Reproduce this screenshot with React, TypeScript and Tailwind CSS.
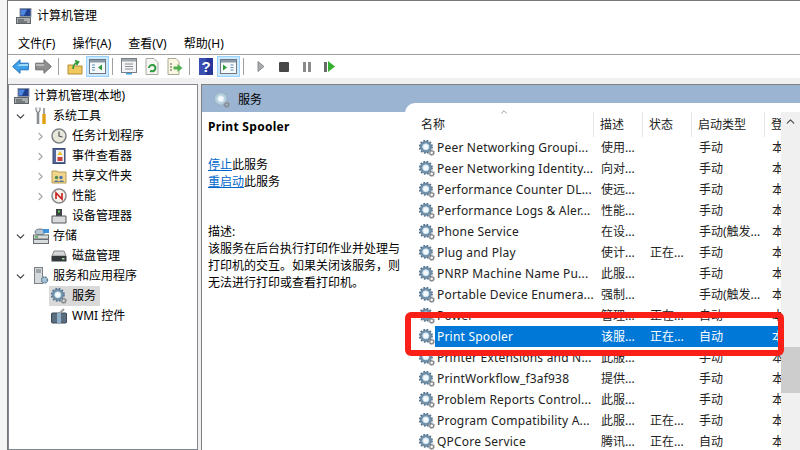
import React from "react";
import { ChevronDown, ChevronRight, ChevronUp } from "lucide-react";

const FONT = "font-['Noto_Sans','Noto_Sans_CJK_SC',sans-serif]";

type Row = { name: string; desc: string; status?: string; start: string; selected?: boolean };

const ROWS: Row[] = [
  { name: "Peer Networking Groupi...", desc: "使用...", start: "手动" },
  { name: "Peer Networking Identity...", desc: "向对...", start: "手动" },
  { name: "Performance Counter DL...", desc: "使远...", start: "手动" },
  { name: "Performance Logs & Aler...", desc: "性能...", start: "手动" },
  { name: "Phone Service", desc: "在设...", start: "手动(触发..." },
  { name: "Plug and Play", desc: "使计...", status: "正在...", start: "手动" },
  { name: "PNRP Machine Name Pu...", desc: "此服...", start: "手动" },
  { name: "Portable Device Enumera...", desc: "强制...", start: "手动(触发..." },
  { name: "Power", desc: "管理...", status: "正在...", start: "自动" },
  { name: "Print Spooler", desc: "该服...", status: "正在...", start: "自动", selected: true },
  { name: "Printer Extensions and N...", desc: "此服...", start: "手动" },
  { name: "PrintWorkflow_f3af938", desc: "提供...", start: "手动" },
  { name: "Problem Reports Control...", desc: "此服...", start: "手动" },
  { name: "Program Compatibility A...", desc: "此服...", status: "正在...", start: "手动" },
  { name: "QPCore Service", desc: "腾讯...", status: "正在...", start: "自动" },
];

// big cog with a small one at the bottom right
const Gears = ({ dim = false }: { dim?: boolean }) => (
  <svg width="16" height="16" viewBox="0 0 16 16" className="shrink-0">
    <circle cx="6.8" cy="6.8" r="4.6" fill="none" stroke={dim ? "#b4d0de" : "#6f8fa8"} strokeWidth="3" />
    <circle cx="6.8" cy="6.8" r="6.3" fill="none" stroke={dim ? "#9cb0bf" : "#55708a"} strokeWidth="1.5" strokeDasharray="1.7 1.6" />
    <circle cx="6.8" cy="6.8" r="3.1" fill="#f4f9fc" stroke={dim ? "#d6e6ee" : "#b7d3e6"} strokeWidth="0.8" />
    <circle cx="12.7" cy="12.7" r="1.9" fill="none" stroke="#85898c" strokeWidth="1.3" />
    <circle cx="12.7" cy="12.7" r="2.9" fill="none" stroke="#96999c" strokeWidth="1" strokeDasharray="1 1" />
  </svg>
);

const Computer = () => (
  <svg width="16" height="16" viewBox="0 0 16 16" className="shrink-0">
    <rect x="4" y="0.5" width="11" height="8" fill="#20408f" stroke="#8d96a3" />
    <path d="M5 1.5h6l-3 6H5z" fill="#4f86e0" />
    <rect x="0.5" y="9.5" width="14" height="6" fill="#a9adb0" stroke="#5f6468" />
    <path d="M2 12h6M2 14h9" stroke="#44484c" />
  </svg>
);

const Tools = () => (
  <svg width="16" height="18" viewBox="0 0 16 18">
    <path d="M5 3v14" stroke="#8a8f94" strokeWidth="2.6" />
    <path d="M3 0.5v3.5l2 1.5 2-1.5V0.5" fill="#eef0f2" stroke="#70767b" strokeWidth="1" />
    <path d="M11 1v6" stroke="#a0a4a8" strokeWidth="2" />
    <path d="M11 7v10" stroke="#e0a010" strokeWidth="3.4" />
  </svg>
);

const Clock = () => (
  <svg width="16" height="16" viewBox="0 0 16 16">
    <circle cx="8" cy="8" r="7" fill="#e9e6da" stroke="#7d8388" strokeWidth="1.5" />
    <path d="M8 3.5V8l3.5 1" fill="none" stroke="#55595c" strokeWidth="1.2" />
  </svg>
);

const EventLog = () => (
  <svg width="16" height="16" viewBox="0 0 16 16">
    <rect x="2" y="0.5" width="12" height="15" fill="#52689a" stroke="#394a70" />
    <rect x="5" y="2" width="8" height="12" fill="#eef0f2" />
    <path d="M9 3l2.5 4h-5z" fill="#f0c020" />
    <rect x="6.5" y="9" width="5" height="4" fill="#c84040" />
  </svg>
);

const SharedFolder = () => (
  <svg width="16" height="16" viewBox="0 0 16 16">
    <path d="M1 3h5l1 1h8v11H1z" fill="#efd68c" stroke="#b89c50" />
    <circle cx="5.5" cy="9.5" r="1.7" fill="#4d8a4d" />
    <circle cx="10" cy="9.5" r="1.7" fill="#4a70b0" />
    <path d="M3 14c0-2 5-2 5 0zM8 14c0-2 5-2 5 0z" fill="#55789a" />
  </svg>
);

const Perf = () => (
  <svg width="16" height="16" viewBox="0 0 16 16">
    <circle cx="8" cy="8" r="7" fill="#f3f1ea" stroke="#868a8c" strokeWidth="1.5" />
    <path d="M5 11V5l6 6V5" fill="none" stroke="#c82020" strokeWidth="1.6" />
  </svg>
);

const Device = () => (
  <svg width="16" height="16" viewBox="0 0 16 16">
    <rect x="5" y="1" width="6" height="7" fill="#3e4246" />
    <rect x="7" y="2.5" width="2" height="2" fill="#5fd060" />
    <path d="M1 8h14v7H1z" fill="#d8d9da" stroke="#55585b" />
  </svg>
);

const Storage = () => (
  <svg width="16" height="16" viewBox="0 0 16 16">
    <ellipse cx="7" cy="4" rx="5" ry="3" fill="#b5c4cf" stroke="#6a7780" />
    <rect x="10" y="1" width="6" height="4" fill="#3f93d8" />
    <rect x="0.5" y="7" width="15" height="4" fill="#d9dcdd" stroke="#676d70" />
    <rect x="0.5" y="11.5" width="15" height="4" fill="#d9dcdd" stroke="#676d70" />
    <rect x="2" y="8.2" width="3" height="1.5" fill="#46a846" />
  </svg>
);

const Disk = () => (
  <svg width="16" height="16" viewBox="0 0 16 16">
    <path d="M3 3h10l2 5H1z" fill="#d4d6d8" stroke="#85898c" />
    <rect x="0.5" y="8" width="15" height="5.5" fill="#35383b" />
    <rect x="11" y="10" width="2.5" height="1.5" fill="#9fe09f" />
  </svg>
);

const ServerApps = () => (
  <svg width="16" height="18" viewBox="0 0 16 18">
    <rect x="1.5" y="0.5" width="8" height="16" fill="#d5d9dc" stroke="#7a8084" />
    <path d="M3 3h5M3 5h5" stroke="#6b7175" />
    <circle cx="11.5" cy="13" r="3" fill="#a8c4d6" stroke="#5c7c94" strokeWidth="1.4" strokeDasharray="1.6 0.8" />
  </svg>
);

const Wmi = () => (
  <svg width="16" height="16" viewBox="0 0 16 16">
    <rect x="0.5" y="5" width="15" height="10" rx="1" fill="#5a6e80" stroke="#3a4856" />
    <rect x="6" y="5" width="4" height="10" fill="#8fb0c8" />
    <path d="M9 5l4-4" stroke="#9a9ea2" strokeWidth="2" />
  </svg>
);

const ToolBtn = ({ active, children }: { active?: boolean; children: React.ReactNode }) => (
  <div className={`flex h-[21px] w-[23px] items-center justify-center ${active ? "border border-[#99d1ff] bg-[#cce8ff]" : ""}`}>
    {children}
  </div>
);

const Sep = () => <div className="ml-[3px] mr-[4px] h-[17px] w-px bg-[#a0a0a0]" />;

const PaneIcon = ({ side }: { side: "left" | "right" }) => (
  <svg width="17" height="15" viewBox="0 0 17 15">
    <rect x="0.5" y="0.5" width="16" height="14" fill="#f6f8fa" stroke="#6d7a86" />
    <rect x="1" y="1" width="15" height="2.5" fill="#8b9aa8" />
    {side === "left" ? (
      <>
        <path d="M3 6h3M3 8.5h3M3 11h3" stroke="#5f93b8" />
        <path d="M13 5.5v6L9 8.5z" fill="#2f9a3c" />
      </>
    ) : (
      <>
        <path d="M3 5.500v6l4-3z" fill="#2f9a3c" />
        <path d="M10.500 6h3M10.500 8.500h3M10.500 11h3" stroke="#5f93b8" />
      </>
    )}
  </svg>
);

const Toolbar = () => (
  <div className="flex h-[23px] items-center pl-px">
    <div className="flex w-[23px] justify-center">
      <svg width="17" height="15" viewBox="0 0 17 15">
        <path d="M0.7 7.5L8 0.7v3.5h8.3v6.6H8v3.5z" fill="#3ea2ea" stroke="#1f6fb8" />
        <path d="M8 5h8v2H5z" fill="#a0dcfa" />
      </svg>
    </div>
    <div className="flex w-[23px] justify-center">
      <svg width="17" height="15" viewBox="0 0 17 15">
        <path d="M16.3 7.5L9 0.7v3.5H0.7v6.6H9v3.5z" fill="#8f8f8f" stroke="#6b6b6b" />
        <path d="M1 5h8v2H1z" fill="#b8b8b8" />
      </svg>
    </div>
    <Sep />
    <ToolBtn>
      <svg width="16" height="16" viewBox="0 0 16 16">
        <path d="M1 6h5l1 1h8v8H1z" fill="#f0c860" stroke="#b48c30" />
        <path d="M6 10c0-4 2-6 5-7M8 1.5l3.5 1.5L9.5 6" fill="none" stroke="#3a9a3a" strokeWidth="1.8" />
      </svg>
    </ToolBtn>
    <ToolBtn active>
      <PaneIcon side="left" />
    </ToolBtn>
    <Sep />
    <ToolBtn>
      <svg width="16" height="17" viewBox="0 0 16 17">
        <rect x="0.5" y="0.5" width="15" height="14" fill="#f2f3f4" stroke="#7a7f84" />
        <rect x="1" y="1" width="14" height="2.5" fill="#a0a6ac" />
        <path d="M4 6h8M4 8.5h8M4 11h8" stroke="#8a9098" />
        <rect x="5" y="15" width="6" height="1.5" fill="#40a0e0" />
      </svg>
    </ToolBtn>
    <ToolBtn>
      <svg width="14" height="17" viewBox="0 0 14 17">
        <path d="M1 0.5h8l4 4v12H1z" fill="#f6f6f2" stroke="#a8a8a4" />
        <path d="M4 10a3.2 3.2 0 1 1 1.2 2.6" fill="none" stroke="#2f9a3c" strokeWidth="2" />
      </svg>
    </ToolBtn>
    <ToolBtn>
      <svg width="16" height="17" viewBox="0 0 16 17">
        <path d="M1 0.5h8l3 3v13H1z" fill="#fbf7e0" stroke="#a8a896" />
        <path d="M3 6h2M3 9h2M3 12h2" stroke="#555" />
        <path d="M6.5 8.5h4V6l5 4-5 4v-2.500h-4z" fill="#50b050" />
      </svg>
    </ToolBtn>
    <Sep />
    <ToolBtn>
      <svg width="14" height="17" viewBox="0 0 14 17">
        <rect width="14" height="17" fill="#25379a" />
        <rect width="7" height="17" fill="#3a50b0" />
        <text x="7" y="14" textAnchor="middle" fontSize="15" fontWeight="700" fill="#fff" fontFamily="Liberation Sans">?</text>
      </svg>
    </ToolBtn>
    <ToolBtn active>
      <PaneIcon side="right" />
    </ToolBtn>
    <Sep />
    <div className="ml-px flex items-center">
      <div className="flex w-[23px] justify-center">
        <svg width="8" height="11" viewBox="0 0 8 11">
          <path d="M1 0.5l6 5-6 5z" fill="#a8aaac" stroke="#8a8c8e" />
        </svg>
      </div>
      <div className="flex w-[23px] justify-center">
        <div className="h-[10px] w-[10px] rounded-[1px] bg-[#474747]" />
      </div>
      <div className="flex w-[23px] justify-center gap-[2px]">
        <div className="h-[10px] w-[3px] bg-[#8a8a8a]" />
        <div className="h-[10px] w-[3px] bg-[#8a8a8a]" />
      </div>
      <div className="flex w-[23px] items-center justify-center gap-[1px]">
        <div className="h-[10px] w-[3px] bg-[#6a6a6a]" />
        <svg width="7" height="11" viewBox="0 0 7 11">
          <path d="M0 0l7 5.5L0 11z" fill="#35b030" />
        </svg>
      </div>
    </div>
  </div>
);

const TreeItem = ({
  child,
  arrow,
  icon,
  label,
  selected,
}: {
  child?: boolean;
  arrow?: "open" | "closed";
  icon: React.ReactNode;
  label: string;
  selected?: boolean;
}) => (
  <div className={`flex h-[20px] items-center ${child ? "pl-[24px]" : "pl-[4px]"}`}>
    <div className="flex w-[14px] shrink-0 justify-center">
      {arrow === "open" && <ChevronDown size={13} strokeWidth={2.2} className="text-[#404040]" />}
      {arrow === "closed" && <ChevronRight size={13} strokeWidth={2} className="text-[#a6a6a6]" />}
    </div>
    <div
      className={`ml-[2px] flex h-[20px] items-center pr-[4px] ${child ? "gap-[5px] pl-[2px]" : "gap-[4px] pl-[4px]"} ${selected ? "bg-[#d9d9d9]" : ""}`}
    >
      <div className="flex w-[16px] justify-center">{icon}</div>
      <span className="text-[12px] text-black">{label}</span>
    </div>
  </div>
);

const Tree = () => (
  <div className="w-[190px] shrink-0 overflow-hidden border border-[#828790] bg-white pt-px">
    <div className="flex h-[20px] items-center gap-[4px] pl-[5px]">
      <Computer />
      <span className="text-[12px]">计算机管理(本地)</span>
    </div>
    <TreeItem arrow="open" icon={<Tools />} label="系统工具" />
    <TreeItem child arrow="closed" icon={<Clock />} label="任务计划程序" />
    <TreeItem child arrow="closed" icon={<EventLog />} label="事件查看器" />
    <TreeItem child arrow="closed" icon={<SharedFolder />} label="共享文件夹" />
    <TreeItem child arrow="closed" icon={<Perf />} label="性能" />
    <TreeItem child icon={<Device />} label="设备管理器" />
    <TreeItem arrow="open" icon={<Storage />} label="存储" />
    <TreeItem child icon={<Disk />} label="磁盘管理" />
    <TreeItem arrow="open" icon={<ServerApps />} label="服务和应用程序" />
    <TreeItem child icon={<Gears />} label="服务" selected />
    <TreeItem child icon={<Wmi />} label="WMI 控件" />
  </div>
);

const HeaderCell = ({ w, children }: { w: string; children: React.ReactNode }) => (
  <div className={`flex h-[25px] shrink-0 items-center border-r border-[#e5e5e5] pl-[6px] text-[12px] text-[#222] ${w}`}>
    {children}
  </div>
);

const ServiceList = () => (
  <div className="relative -mt-[9px] min-w-0 flex-1 overflow-hidden rounded-tl-[10px] bg-white pt-[9px]">
    <div className="flex pl-[9px]">
      <div className="relative flex h-[25px] w-[180px] shrink-0 items-center border-r border-[#e5e5e5] pl-[7px] text-[12px] text-[#222]">
        名称
        <ChevronUp size={10} className="absolute left-[85px] top-[-5px] text-[#888]" />
      </div>
      <HeaderCell w="w-[49px]">描述</HeaderCell>
      <HeaderCell w="w-[49px]">状态</HeaderCell>
      <HeaderCell w="w-[73px]">启动类型</HeaderCell>
      <div className="flex h-[25px] items-center pl-[6px] text-[12px] text-[#222]">登</div>
    </div>
    {ROWS.map((r) => (
      <div key={r.name} className="flex h-[21px] items-center pl-[14px] text-[12px] text-[#222]">
        <Gears />
        <div className={`flex h-[21px] flex-1 items-center pl-[2px] ${r.selected ? "bg-[#0078d7] text-white" : ""}`}>
          <div className="w-[164px] shrink-0 overflow-hidden whitespace-nowrap tracking-[0.2px]">{r.name}</div>
          <div className="w-[49px] shrink-0 whitespace-nowrap">{r.desc}</div>
          <div className="w-[49px] shrink-0 whitespace-nowrap">{r.status}</div>
          <div className="w-[73px] shrink-0 whitespace-nowrap">{r.start}</div>
          <div className="whitespace-nowrap">本</div>
        </div>
      </div>
    ))}
    {/* scrollbar */}
    <div className="absolute bottom-0 right-0 top-[9px] flex w-[19px] flex-col items-center bg-[#f0f0f0]">
      <ChevronUp size={13} strokeWidth={2.4} className="mt-[3px] text-[#505050]" />
      <div className="mt-[219px] h-[46px] w-full bg-[#cdcdcd]" />
    </div>
  </div>
);

export default function App() {
  return (
    <div className={`relative flex h-[450px] w-[800px] flex-col overflow-hidden bg-[#f5f5f5] pl-[7px] ${FONT}`}>
      <div className="flex min-h-0 flex-1 flex-col border-l border-t border-[#777] bg-white">
        <div className="flex h-[29px] shrink-0 items-center gap-[5px] pl-[8px] text-[12px] text-black">
          <Computer />
          <span className="text-[12px]">计算机管理</span>
        </div>
        <div className="flex h-[25px] shrink-0 items-center gap-[17px] border-b border-[#a0a0a0] pl-[10px] pt-[3px] text-[12px]">
          <span>文件(F)</span>
          <span>操作(A)</span>
          <span>查看(V)</span>
          <span>帮助(H)</span>
        </div>
        <Toolbar />
        <div className="flex min-h-0 flex-1 gap-[3px] bg-[#f0f0f0] pt-[6px]">
          <Tree />
          <div className="flex min-w-0 flex-1 flex-col overflow-hidden border-l border-t border-[#808080] bg-white">
            <div className="flex h-[27px] shrink-0 items-center gap-[8px] bg-[#9bb4d1] pl-[12px] pt-[2px] text-[12px]">
              <Gears dim />
              <span>服务</span>
            </div>
            <div className="flex min-h-0 flex-1">
              <div className="w-[203px] shrink-0 bg-white pl-[6px] pr-[2px]">
                <div className="pt-[7px] text-[12px] font-bold leading-[16px] tracking-[0.3px]">Print Spooler</div>
                <div className="mt-[21px] text-[12px] leading-[17px]">
                  <div>
                    <span className="text-[#0066cc] underline">停止</span>此服务
                  </div>
                  <div>
                    <span className="text-[#0066cc] underline">重启动</span>此服务
                  </div>
                </div>
                <div className="mt-[33px] text-[12px] leading-[17px]">
                  <div>描述:</div>
                  <div>该服务在后台执行打印作业并处理与打印机的交互。如果关闭该服务，则无法进行打印或查看打印机。</div>
                </div>
              </div>
              <ServiceList />
            </div>
          </div>
        </div>
      </div>
      {/* red annotation box */}
      <div className="absolute left-[405px] top-[312px] h-[44px] w-[379px] rounded-[6px] border-[6px] border-[#fa1f17]" />
    </div>
  );
}
